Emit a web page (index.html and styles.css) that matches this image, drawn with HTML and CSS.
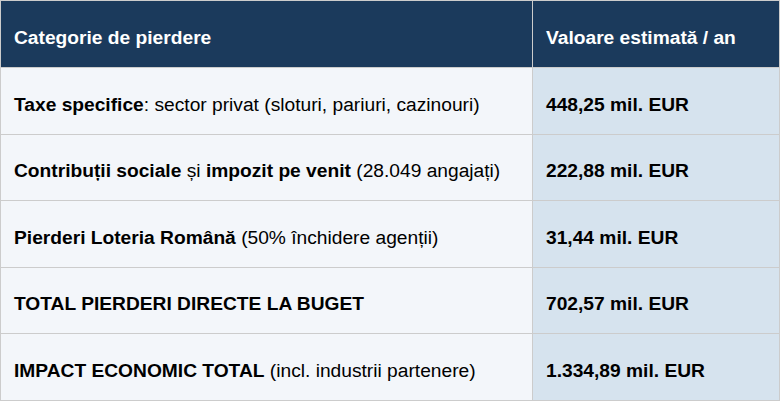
FILE: index.html
```html
<!DOCTYPE html>
<html lang="ro">
<head>
<meta charset="utf-8">
<title>Pierderi</title>
<link rel="stylesheet" href="styles.css">
</head>
<body>
<table class="loss-table">
  <thead>
    <tr class="head-row">
      <th class="cat">Categorie de pierdere</th>
      <th class="val">Valoare estimată / an</th>
    </tr>
  </thead>
  <tbody>
    <tr class="body-row">
      <td class="cat"><strong>Taxe specifice</strong>: sector privat (sloturi, pariuri, cazinouri)</td>
      <td class="val"><strong>448,25 mil. EUR</strong></td>
    </tr>
    <tr class="body-row">
      <td class="cat"><strong>Contribuții sociale</strong> și <strong>impozit pe venit</strong> (28.049 angajați)</td>
      <td class="val"><strong>222,88 mil. EUR</strong></td>
    </tr>
    <tr class="body-row">
      <td class="cat"><strong>Pierderi Loteria Română</strong> (50% închidere agenții)</td>
      <td class="val"><strong>31,44 mil. EUR</strong></td>
    </tr>
    <tr class="body-row">
      <td class="cat"><strong>TOTAL PIERDERI DIRECTE LA BUGET</strong></td>
      <td class="val"><strong>702,57 mil. EUR</strong></td>
    </tr>
    <tr class="body-row">
      <td class="cat"><strong>IMPACT ECONOMIC TOTAL</strong> (incl. industrii partenere)</td>
      <td class="val"><strong>1.334,89 mil. EUR</strong></td>
    </tr>
  </tbody>
</table>
</body>
</html>
```

FILE: styles.css
```css
html, body {
  margin: 0;
  padding: 0;
  background: #ffffff;
}

body {
  font-family: "Liberation Sans", Arial, sans-serif;
  font-size: 19.2px;
  color: #000;
}

.loss-table {
  width: 780px;
  border-collapse: collapse;
  table-layout: fixed;
  font-family: "Liberation Sans", Arial, sans-serif;
  font-size: 19.2px;
}

.loss-table th,
.loss-table td {
  border: 1px solid #cccccc;
  padding: 8px 12px 0 13px;
  text-align: left;
  vertical-align: middle;
  font-family: "Liberation Sans", Arial, sans-serif;
  font-size: 19.2px;
  line-height: 22px;
  box-sizing: border-box;
  white-space: nowrap;
}

.head-row {
  height: 67px;
}

.body-row {
  height: 66.5px;
}

.loss-table th {
  background: #1b3a5c;
  color: #ffffff;
  font-weight: bold;
}

.loss-table .cat {
  width: 532px;
}

.loss-table td.cat {
  background: #f3f6fa;
}

.loss-table td.val {
  background: #d6e3ee;
}

.loss-table strong {
  font-weight: bold;
}
```
